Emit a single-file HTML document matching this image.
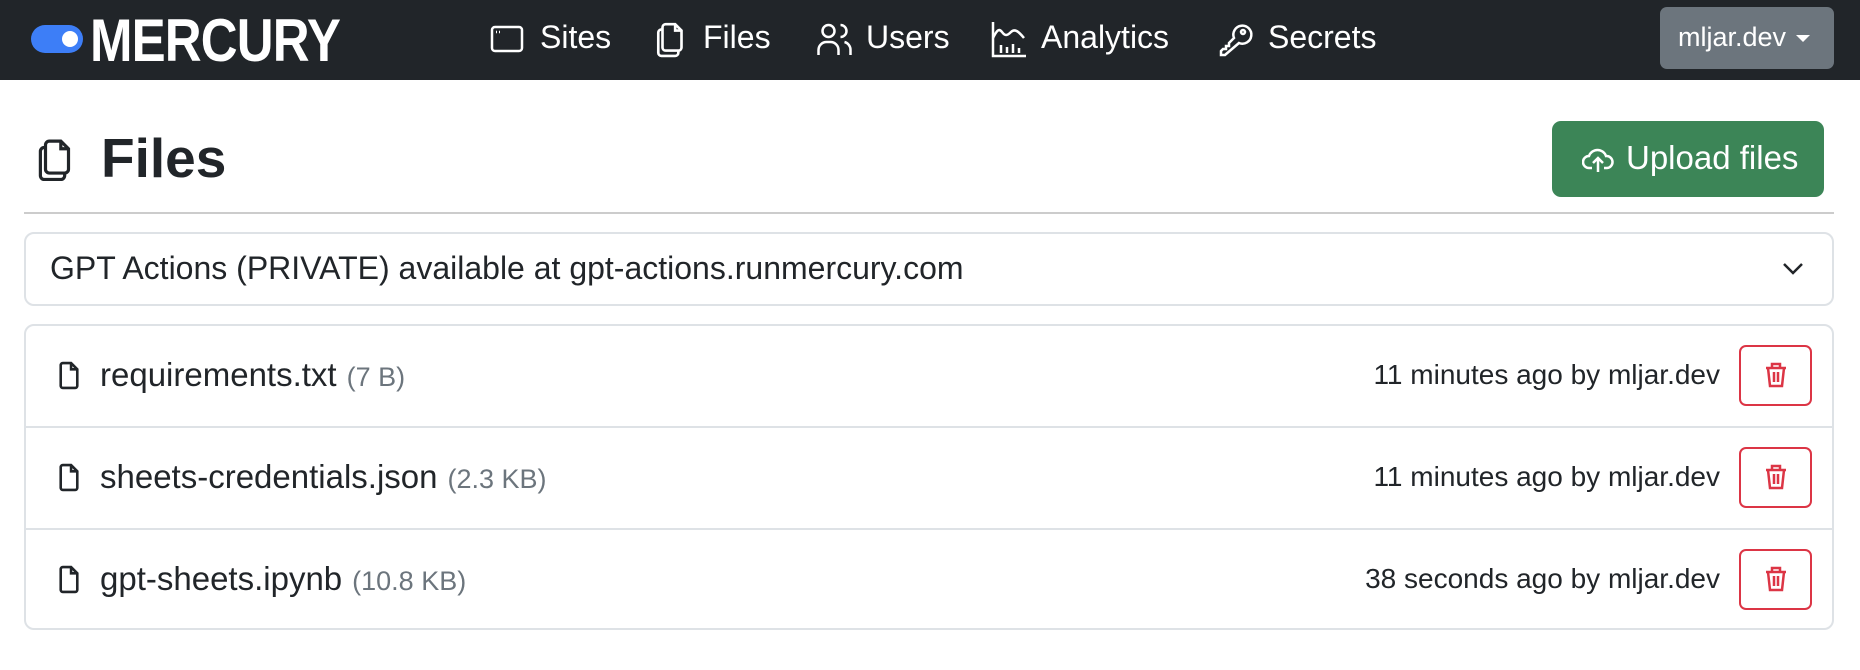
<!DOCTYPE html>
<html><head><style>
*{box-sizing:border-box;margin:0;padding:0}
body{width:1860px;height:670px;background:#fff;font-family:"Liberation Sans",sans-serif;color:#212529;position:relative;overflow:hidden}
.nav{position:absolute;left:0;top:0;width:1860px;height:80px;background:#212529}
.a{position:absolute;white-space:nowrap}
.ni{color:#fff;font-size:32px;top:19px}
svg{position:absolute}
.row{position:absolute;left:24px;width:1810px;height:102px;border-top:2px solid #dee2e6}
.fn{font-size:33px;top:32px;left:76px}
.fn span{color:#6c757d;font-size:27px;margin-left:10px}
.tm{font-size:28px;right:114px;top:35px}
.del{position:absolute;right:22px;top:21px;width:73px;height:61px;border:2px solid #dc3545;border-radius:7px}
</style></head><body>
<div class="nav"></div>
<div class="a" style="left:31px;top:25px;width:52px;height:28px;border-radius:14px;background:#3d7ef7"></div>
<div class="a" style="left:62px;top:31px;width:16px;height:16px;border-radius:8px;background:#fff"></div>
<div class="a" style="left:90px;top:6px;color:#fff;font-size:60px;font-weight:bold;transform:scaleX(0.85);transform-origin:left;letter-spacing:-1px">MERCURY</div>

<svg style="left:490px;top:25px" width="34" height="28" viewBox="0 0 34 28" fill="none" stroke="#fff" stroke-width="2.5"><rect x="2" y="2" width="30" height="24" rx="3"/><path d="M6 7h1M9 7h1"/></svg>
<div class="a ni" style="left:540px">Sites</div>
<svg style="left:656px;top:20px" width="32" height="38" viewBox="0 0 30 36" fill="none" stroke="#fff" stroke-width="2.5"><path d="M9 4h9l6 6v16a3 3 0 0 1-3 3H9a3 3 0 0 1-3-3V7a3 3 0 0 1 3-3z"/><path d="M18 4v6h6"/><path d="M6 9H5a3 3 0 0 0-3 3v19a3 3 0 0 0 3 3h13a3 3 0 0 0 3-3v-2"/></svg>
<div class="a ni" style="left:703px">Files</div>
<svg style="left:816px;top:21px" width="37" height="36" viewBox="0 0 36 36" fill="none" stroke="#fff" stroke-width="2.5"><circle cx="12" cy="10" r="6"/><path d="M2 34v-5a8 8 0 0 1 8-8h4a8 8 0 0 1 8 8v5"/><path d="M24 4a6 6 0 0 1 0 12M28 21a8 8 0 0 1 6 8v5"/></svg>
<div class="a ni" style="left:866px">Users</div>
<svg style="left:991px;top:20px" width="36" height="38" viewBox="0 0 36 38" fill="none" stroke="#fff" stroke-width="2.5"><path d="M2 2v34h33"/><path d="M2 18c4-8 6-10 9-6s5 4 9 0 8 0 13 6"/><path d="M10 33v-8M16 33v-6M22 33v-9M28 33v-5"/></svg>
<div class="a ni" style="left:1041px">Analytics</div>
<svg style="left:1218px;top:21px" width="36" height="36" viewBox="0 0 36 36" fill="none" stroke="#fff" stroke-width="2.5"><path d="M16 17a9 9 0 1 1 5 5L7 34H3v-4l2-2 3 0 0-3 3 0 0-3z"/><circle cx="25" cy="11" r="2"/></svg>
<div class="a ni" style="left:1268px">Secrets</div>

<div class="a" style="left:1660px;top:7px;width:174px;height:62px;background:#6c757d;border-radius:7px"></div>
<div class="a" style="left:1678px;top:22px;color:#fff;font-size:27px">mljar.dev</div>
<div class="a" style="left:1796px;top:35px;width:0;height:0;border-left:7px solid transparent;border-right:7px solid transparent;border-top:7px solid #fff"></div>

<svg style="left:36px;top:136px" width="42" height="46" viewBox="0 0 30 36" fill="none" stroke="#212529" stroke-width="2.5"><path d="M9 4h9l6 6v16a3 3 0 0 1-3 3H9a3 3 0 0 1-3-3V7a3 3 0 0 1 3-3z"/><path d="M18 4v6h6"/><path d="M6 9H5a3 3 0 0 0-3 3v19a3 3 0 0 0 3 3h13a3 3 0 0 0 3-3v-2"/></svg>
<div class="a" style="left:101px;top:126px;font-size:55px;font-weight:bold">Files</div>

<div class="a" style="left:1552px;top:121px;width:272px;height:76px;background:#3c8557;border-radius:9px"></div>
<svg style="left:1582px;top:144px" width="32" height="30" viewBox="0 0 32 30" fill="none" stroke="#fff" stroke-width="2.5"><path d="M10 24H7a6 6 0 0 1 0-12 9 9 0 0 1 17 0 6 6 0 0 1 1 12h-3"/><path d="M16 28V14M11 19l5-5 5 5"/></svg>
<div class="a" style="left:1626px;top:139px;color:#fff;font-size:33px">Upload files</div>

<div class="a" style="left:24px;top:212px;width:1810px;height:2px;background:#ccc"></div>

<div class="a" style="left:24px;top:232px;width:1810px;height:74px;border:2px solid #dee2e6;border-radius:10px"></div>
<div class="a" style="left:50px;top:250px;font-size:32px">GPT Actions (PRIVATE) available at gpt-actions.runmercury.com</div>
<svg style="left:1782px;top:262px" width="22" height="14" viewBox="0 0 22 14" fill="none" stroke="#212529" stroke-width="2.5"><path d="M2 2l9 9 9-9"/></svg>

<div class="a" style="left:24px;top:324px;width:1810px;height:306px;border:2px solid #dee2e6;border-radius:10px"></div>
<div class="row" style="top:324px;border-top:none">
<svg style="left:34px;top:37px" width="22" height="29" viewBox="0 0 20 28" fill="none" stroke="#212529" stroke-width="2.5"><path d="M4 2h8l6 6v16a2 2 0 0 1-2 2H4a2 2 0 0 1-2-2V4a2 2 0 0 1 2-2z"/><path d="M12 2v6h6"/></svg>
<div class="a fn">requirements.txt<span>(7 B)</span></div><div class="a tm">11 minutes ago by mljar.dev</div>
<div class="del"><svg style="left:24px;top:15px" width="22" height="26" viewBox="0 0 22 26" fill="none" stroke="#dc3545" stroke-width="2.5"><path d="M1 6h20M7 6V2h8v4M3 6l2 18h12l2-18M9 10v10M13 10v10"/></svg></div></div>
<div class="row" style="top:426px">
<svg style="left:34px;top:35px" width="22" height="29" viewBox="0 0 20 28" fill="none" stroke="#212529" stroke-width="2.5"><path d="M4 2h8l6 6v16a2 2 0 0 1-2 2H4a2 2 0 0 1-2-2V4a2 2 0 0 1 2-2z"/><path d="M12 2v6h6"/></svg>
<div class="a fn" style="top:30px">sheets-credentials.json<span>(2.3 KB)</span></div><div class="a tm" style="top:33px">11 minutes ago by mljar.dev</div>
<div class="del" style="top:19px"><svg style="left:24px;top:15px" width="22" height="26" viewBox="0 0 22 26" fill="none" stroke="#dc3545" stroke-width="2.5"><path d="M1 6h20M7 6V2h8v4M3 6l2 18h12l2-18M9 10v10M13 10v10"/></svg></div></div>
<div class="row" style="top:528px">
<svg style="left:34px;top:35px" width="22" height="29" viewBox="0 0 20 28" fill="none" stroke="#212529" stroke-width="2.5"><path d="M4 2h8l6 6v16a2 2 0 0 1-2 2H4a2 2 0 0 1-2-2V4a2 2 0 0 1 2-2z"/><path d="M12 2v6h6"/></svg>
<div class="a fn" style="top:30px">gpt-sheets.ipynb<span>(10.8 KB)</span></div><div class="a tm" style="top:33px">38 seconds ago by mljar.dev</div>
<div class="del" style="top:19px"><svg style="left:24px;top:15px" width="22" height="26" viewBox="0 0 22 26" fill="none" stroke="#dc3545" stroke-width="2.5"><path d="M1 6h20M7 6V2h8v4M3 6l2 18h12l2-18M9 10v10M13 10v10"/></svg></div></div>
</body></html>
